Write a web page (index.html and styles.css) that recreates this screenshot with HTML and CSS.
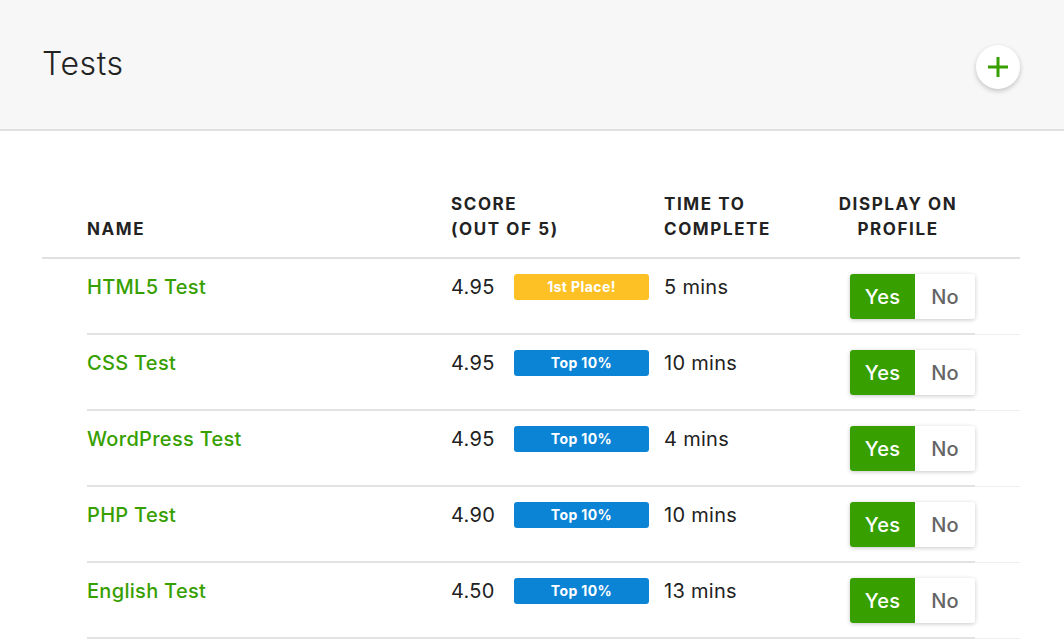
FILE: index.html
```html
<!DOCTYPE html>
<html lang="en">
<head>
<meta charset="utf-8">
<title>Tests</title>
<link rel="stylesheet" href="styles.css">
</head>
<body>
<header class="page-header">
  <h1 class="page-title">Tests</h1>
  <button class="add-btn" aria-label="Add test">
    <svg width="22" height="22" viewBox="0 0 22 22"><path d="M11 1v20M1 11h20" stroke="#37a000" stroke-width="3" fill="none"/></svg>
  </button>
</header>
<main class="content">
  <div class="table">
    <div class="thead">
      <div class="th th-name">NAME</div>
      <div class="th th-score">SCORE<br>(OUT OF 5)</div>
      <div class="th th-time">TIME TO<br>COMPLETE</div>
      <div class="th th-display"><span class="th-display-text">DISPLAY ON<br>PROFILE</span></div>
    </div>

    <div class="row">
      <div class="cells">
        <div class="cell c-name"><a class="test-link" href="#">HTML5 Test</a></div>
        <div class="cell c-score"><span class="score">4.95</span><span class="badge badge-gold">1st Place!</span></div>
        <div class="cell c-time">5 mins</div>
        <div class="cell c-display"><div class="toggle"><span class="tg tg-yes">Yes</span><span class="tg tg-no">No</span></div></div>
      </div>
      <div class="tail"></div>
    </div>

    <div class="row">
      <div class="cells">
        <div class="cell c-name"><a class="test-link" href="#">CSS Test</a></div>
        <div class="cell c-score"><span class="score">4.95</span><span class="badge badge-blue">Top 10%</span></div>
        <div class="cell c-time">10 mins</div>
        <div class="cell c-display"><div class="toggle"><span class="tg tg-yes">Yes</span><span class="tg tg-no">No</span></div></div>
      </div>
      <div class="tail"></div>
    </div>

    <div class="row">
      <div class="cells">
        <div class="cell c-name"><a class="test-link" href="#">WordPress Test</a></div>
        <div class="cell c-score"><span class="score">4.95</span><span class="badge badge-blue">Top 10%</span></div>
        <div class="cell c-time">4 mins</div>
        <div class="cell c-display"><div class="toggle"><span class="tg tg-yes">Yes</span><span class="tg tg-no">No</span></div></div>
      </div>
      <div class="tail"></div>
    </div>

    <div class="row">
      <div class="cells">
        <div class="cell c-name"><a class="test-link" href="#">PHP Test</a></div>
        <div class="cell c-score"><span class="score">4.90</span><span class="badge badge-blue">Top 10%</span></div>
        <div class="cell c-time">10 mins</div>
        <div class="cell c-display"><div class="toggle"><span class="tg tg-yes">Yes</span><span class="tg tg-no">No</span></div></div>
      </div>
      <div class="tail"></div>
    </div>

    <div class="row">
      <div class="cells">
        <div class="cell c-name"><a class="test-link" href="#">English Test</a></div>
        <div class="cell c-score"><span class="score">4.50</span><span class="badge badge-blue">Top 10%</span></div>
        <div class="cell c-time">13 mins</div>
        <div class="cell c-display"><div class="toggle"><span class="tg tg-yes">Yes</span><span class="tg tg-no">No</span></div></div>
      </div>
      <div class="tail"></div>
    </div>
  </div>
</main>
</body>
</html>
```

FILE: styles.css
```css
* { box-sizing: border-box; }

html, body {
  margin: 0;
  padding: 0;
  background: #ffffff;
  font-family: Inter, "Open Sans", "Liberation Sans", sans-serif;
  color: #222222;
}

.page-header {
  height: 131px;
  background: #f7f7f7;
  border-bottom: 2px solid #e0e0e0;
  display: flex;
  align-items: center;
  justify-content: space-between;
  padding: 0 44px 0 42px;
}

.page-title {
  margin: 0 0 2px 0;
  font-size: 32px;
  font-weight: 300;
  color: #222222;
  letter-spacing: 0.6px;
}

.add-btn {
  width: 44px;
  height: 44px;
  border-radius: 50%;
  border: none;
  background: #ffffff;
  box-shadow: 0 2px 5px rgba(0, 0, 0, 0.22);
  display: flex;
  align-items: center;
  justify-content: center;
  padding: 0;
  margin-top: 5px;
}

.content {
  padding: 61px 44px 0 42px;
}

.thead {
  display: grid;
  grid-template-columns: 364px 213px 175px 1fr;
  padding: 0 0 15px 45px;
  border-bottom: 2px solid #e0e0e0;
}

.th {
  font-size: 17px;
  font-weight: 700;
  letter-spacing: 1.6px;
  line-height: 25px;
  color: #222222;
  align-self: end;
}

.th-display-text {
  display: inline-block;
  text-align: center;
  width: 122px;
  margin-left: -2px;
}

.row {
  display: flex;
  padding-left: 45px;
}

.cells {
  flex: 0 0 888px;
  display: grid;
  grid-template-columns: 364px 213px 175px 1fr;
  padding: 15px 0 14px 0;
  border-bottom: 2px solid #e2e2e2;
}

.tail {
  flex: 1;
  border-bottom: 1px solid #eeeeee;
}

.cell {
  font-size: 20px;
  line-height: 26px;
  letter-spacing: 0.3px;
  color: #222222;
}

.test-link {
  color: #37a000;
  text-decoration: none;
  font-weight: 500;
}

.c-score {
  display: flex;
  align-items: flex-start;
}

.score {
  width: 63px;
}

.badge {
  width: 135px;
  height: 26px;
  border-radius: 3px;
  color: #ffffff;
  font-size: 14px;
  font-weight: 700;
  line-height: 25px;
  letter-spacing: 0.4px;
  text-align: center;
}

.badge-gold { background: #fdc125; }
.badge-blue { background: #0b84d6; }

.c-display {
  padding-left: 11px;
}

.toggle {
  display: inline-flex;
  height: 45px;
  border-radius: 3px;
  overflow: hidden;
  box-shadow: 0 1px 4px rgba(0, 0, 0, 0.22);
}

.tg {
  display: flex;
  align-items: center;
  justify-content: center;
  font-size: 20px;
  font-weight: 500;
  letter-spacing: 0.2px;
}

.tg-yes {
  width: 65px;
  background: #37a000;
  color: #ffffff;
}

.tg-no {
  width: 60px;
  background: #ffffff;
  color: #656565;
}
```
